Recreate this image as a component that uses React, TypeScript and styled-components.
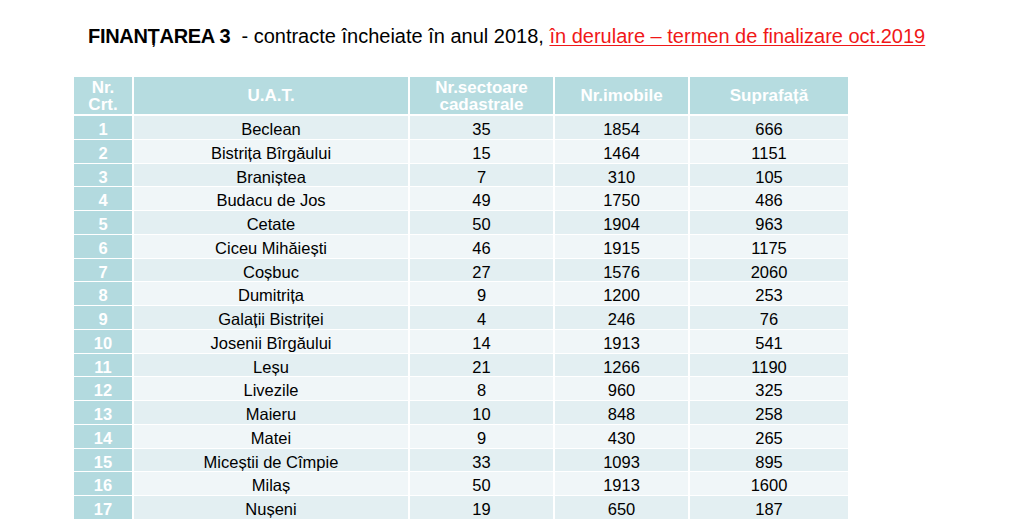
import * as React from "react"
import styled, { createGlobalStyle } from "styled-components"

const GlobalStyle = createGlobalStyle`
  html, body {
    margin: 0;
    padding: 0;
    background: #ffffff;
  }
  body {
    font-family: "Liberation Sans", Arial, sans-serif;
  }
`

const Page = styled.main`
  width: 1024px;
  height: 522px;
  overflow: hidden;
  padding: 24px 0 0 74px;
  box-sizing: border-box;
`

const Title = styled.h1`
  margin: 0 0 0 14px;
  height: 24px;
  font: 400 20px/24px "Liberation Sans", Arial, sans-serif;
  color: #000;
  white-space: nowrap;
`

const Bold = styled.b`
  font-weight: 700;
  letter-spacing: -0.3px;
`

const Red = styled.span`
  color: #f01818;
  text-decoration: underline;
  text-underline-offset: 2px;
  text-decoration-thickness: 1px;
`

const Table = styled.div`
  margin-top: 29px;
  width: 774px;
  display: grid;
  grid-template-columns: 58px 274px 143px 133px 158px;
  grid-template-rows: 38px;
  grid-auto-rows: 22.76px;
  column-gap: 2px;
  row-gap: 1px;
`

const HeadCell = styled.div`
  background: #b6dce0;
  color: #fff;
  font: 700 17px/17px "Liberation Sans", Arial, sans-serif;
  display: flex;
  align-items: center;
  justify-content: center;
  text-align: center;
  overflow: hidden;
  margin-bottom: 1px;
`

const NrCell = styled.div`
  background: #b3dadf;
  color: #fff;
  font: 700 16.5px/26px "Liberation Sans", Arial, sans-serif;
  text-align: center;
  overflow: hidden;
`

const Cell = styled.div<{ $odd: boolean }>`
  background: ${(p) => (p.$odd ? "#e3eff2" : "#f0f6f8")};
  color: #000;
  font: 400 16.5px/26px "Liberation Sans", Arial, sans-serif;
  text-align: center;
  white-space: nowrap;
  overflow: hidden;
`

const rows: [string, number, number, number][] = [
  ["Beclean", 35, 1854, 666],
  ["Bistrița Bîrgăului", 15, 1464, 1151],
  ["Braniștea", 7, 310, 105],
  ["Budacu de Jos", 49, 1750, 486],
  ["Cetate", 50, 1904, 963],
  ["Ciceu Mihăiești", 46, 1915, 1175],
  ["Coșbuc", 27, 1576, 2060],
  ["Dumitrița", 9, 1200, 253],
  ["Galații Bistriței", 4, 246, 76],
  ["Josenii Bîrgăului", 14, 1913, 541],
  ["Leșu", 21, 1266, 1190],
  ["Livezile", 8, 960, 325],
  ["Maieru", 10, 848, 258],
  ["Matei", 9, 430, 265],
  ["Miceștii de Cîmpie", 33, 1093, 895],
  ["Milaș", 50, 1913, 1600],
  ["Nușeni", 19, 650, 187],
]

const App: React.FC = () => {
  return (
    <>
      <GlobalStyle />
      <Page>
        <Title>
          <Bold>FINANȚAREA 3</Bold>&nbsp; - contracte încheiate în anul 2018,{" "}
          <Red>în derulare – termen de finalizare oct.2019</Red>
        </Title>
        <Table>
          <HeadCell>Nr.<br />Crt.</HeadCell>
          <HeadCell>U.A.T.</HeadCell>
          <HeadCell>Nr.sectoare<br />cadastrale</HeadCell>
          <HeadCell>Nr.imobile</HeadCell>
          <HeadCell>Suprafață</HeadCell>
          {rows.map(([uat, sect, imob, supr], i) => {
            const odd = i % 2 === 0
            return (
              <React.Fragment key={uat}>
                <NrCell>{i + 1}</NrCell>
                <Cell $odd={odd}>{uat}</Cell>
                <Cell $odd={odd}>{sect}</Cell>
                <Cell $odd={odd}>{imob}</Cell>
                <Cell $odd={odd}>{supr}</Cell>
              </React.Fragment>
            )
          })}
        </Table>
      </Page>
    </>
  )
}

export default App
